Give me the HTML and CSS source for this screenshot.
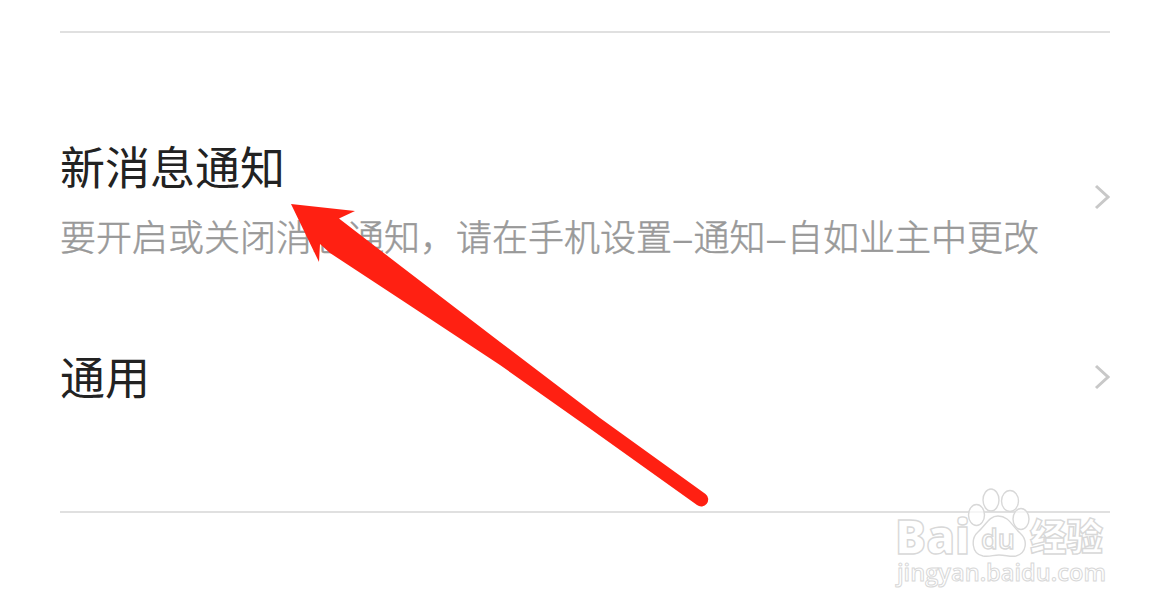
FILE: index.html
```
<!DOCTYPE html>
<html lang="zh-CN">

<head>
  <meta charset="UTF-8">
  <meta name="viewport" content="width=device-width, initial-scale=1.0">
  <title>设置</title>
  <link rel="stylesheet" href="styles.css">
</head>

<body>

  <div class="settings">
    <div class="item item-notice">
      <div class="item-text">
        <h2>新消息通知</h2>
        <p>要开启或关闭消息通知，请在手机设置<span class="dash">–</span>通知<span class="dash">–</span>自如业主中更改</p>
      </div>
      <svg class="chevron" viewBox="0 0 16 26">
        <path d="M2 2 L14 13 L2 24" />
      </svg>
    </div>

    <div class="item">
      <div class="item-text">
        <h2>通用</h2>
      </div>
      <svg class="chevron" viewBox="0 0 16 26">
        <path d="M2 2 L14 13 L2 24" />
      </svg>
    </div>
  </div>

  <!-- red arrow -->
  <svg class="arrow" viewBox="0 0 420 304">
    <path d="M1 0 L65 7 L49 14.500 L110 61.500 L210 138 L310 214 L415.500 290 A6.500 6.500 0 0 1 407 301 L302 226 L210 161 L110 95 L40 49 L30 40 L29 58 Z" />
  </svg>

  <!-- watermark -->
  <svg class="watermark" viewBox="0 0 240 120">
    <g class="paw">
      <ellipse cx="111" cy="20" rx="8" ry="11" />
      <ellipse cx="130" cy="21" rx="8.500" ry="10.500" />
      <ellipse cx="96.500" cy="35" rx="8" ry="10.500" />
      <ellipse cx="141" cy="39" rx="8" ry="10.500" />
      <path d="M118 36 C109 36 106 45 98 52 C91 58 91 74 103 76 C110 77 113 75 119 75 C126 75 130 77 136 76 C147 73 148 60 140 53 C132 46 129 36 118 36 Z" />
    </g>
    <text class="brand" x="15" y="74" textLength="75" lengthAdjust="spacingAndGlyphs">Bai</text>
    <text class="du" x="101" y="69" textLength="34" lengthAdjust="spacingAndGlyphs">du</text>
    <text class="cn" x="150" y="71" textLength="73" lengthAdjust="spacingAndGlyphs">经验</text>
    <text class="url" x="17" y="101" textLength="209" lengthAdjust="spacingAndGlyphs">jingyan.baidu.com</text>
  </svg>

</body>

</html>
```
FILE: styles.css
```
* {
  box-sizing: border-box;
}

body {
  margin: 0;
  height: 614px;
  padding: 31px 60px 0;
  position: relative;
  overflow: hidden;
  background-color: #fff;
  font-family: "Noto Sans CJK SC", sans-serif;
}

.settings {
  height: 482px;
  padding-top: 104px;
  border-top: 2px solid #e0e0e0;
  border-bottom: 2px solid #e0e0e0;
}

.item {
  display: flex;
  justify-content: space-between;
  align-items: center;
  height: 60px;
}

.item-notice {
  height: 120px;
  margin-bottom: 90px;
}

.item-text {
  padding-bottom: 3px;
}

h2,
p {
  margin: 0;
  font-weight: 400;
  white-space: nowrap;
}

h2 {
  font-size: 45px;
  line-height: 60px;
  color: #222;
}

p {
  margin-top: 14px;
  margin-bottom: -4px;
  font-size: 36px;
  line-height: 50px;
  font-weight: 300;
  color: #999;
  -webkit-text-stroke: 0.5px #999;
}

.dash {
  display: inline-block;
  position: relative;
  top: -1px;
  width: 21.5px;
  font-family: "Liberation Sans", sans-serif;
  font-size: 33px;
  line-height: 1;
  text-align: center;
  -webkit-text-stroke: 0;
}

.chevron {
  width: 16px;
  height: 26px;
  fill: none;
  stroke: #c8c8c8;
  stroke-width: 3;
}

.arrow {
  position: absolute;
  left: 290px;
  top: 204px;
  width: 420px;
  height: 304px;
  fill: #ff2012;
}

.watermark {
  position: absolute;
  left: 880px;
  top: 480px;
  width: 240px;
  height: 120px;
  fill: #fff;
  stroke: #d8d8d8;
  stroke-width: 1.4;
}

.paw {
  fill-opacity: 0.7;
}

.brand,
.du {
  font-family: "Open Sans", sans-serif;
  font-size: 48px;
  font-weight: 800;
}

.du {
  font-size: 27px;
  font-weight: 600;
}

.cn {
  font-size: 37px;
  font-weight: 900;
}

.url {
  font-family: "Open Sans", sans-serif;
  font-size: 24px;
  font-weight: 600;
  stroke-width: 1;
}
```
